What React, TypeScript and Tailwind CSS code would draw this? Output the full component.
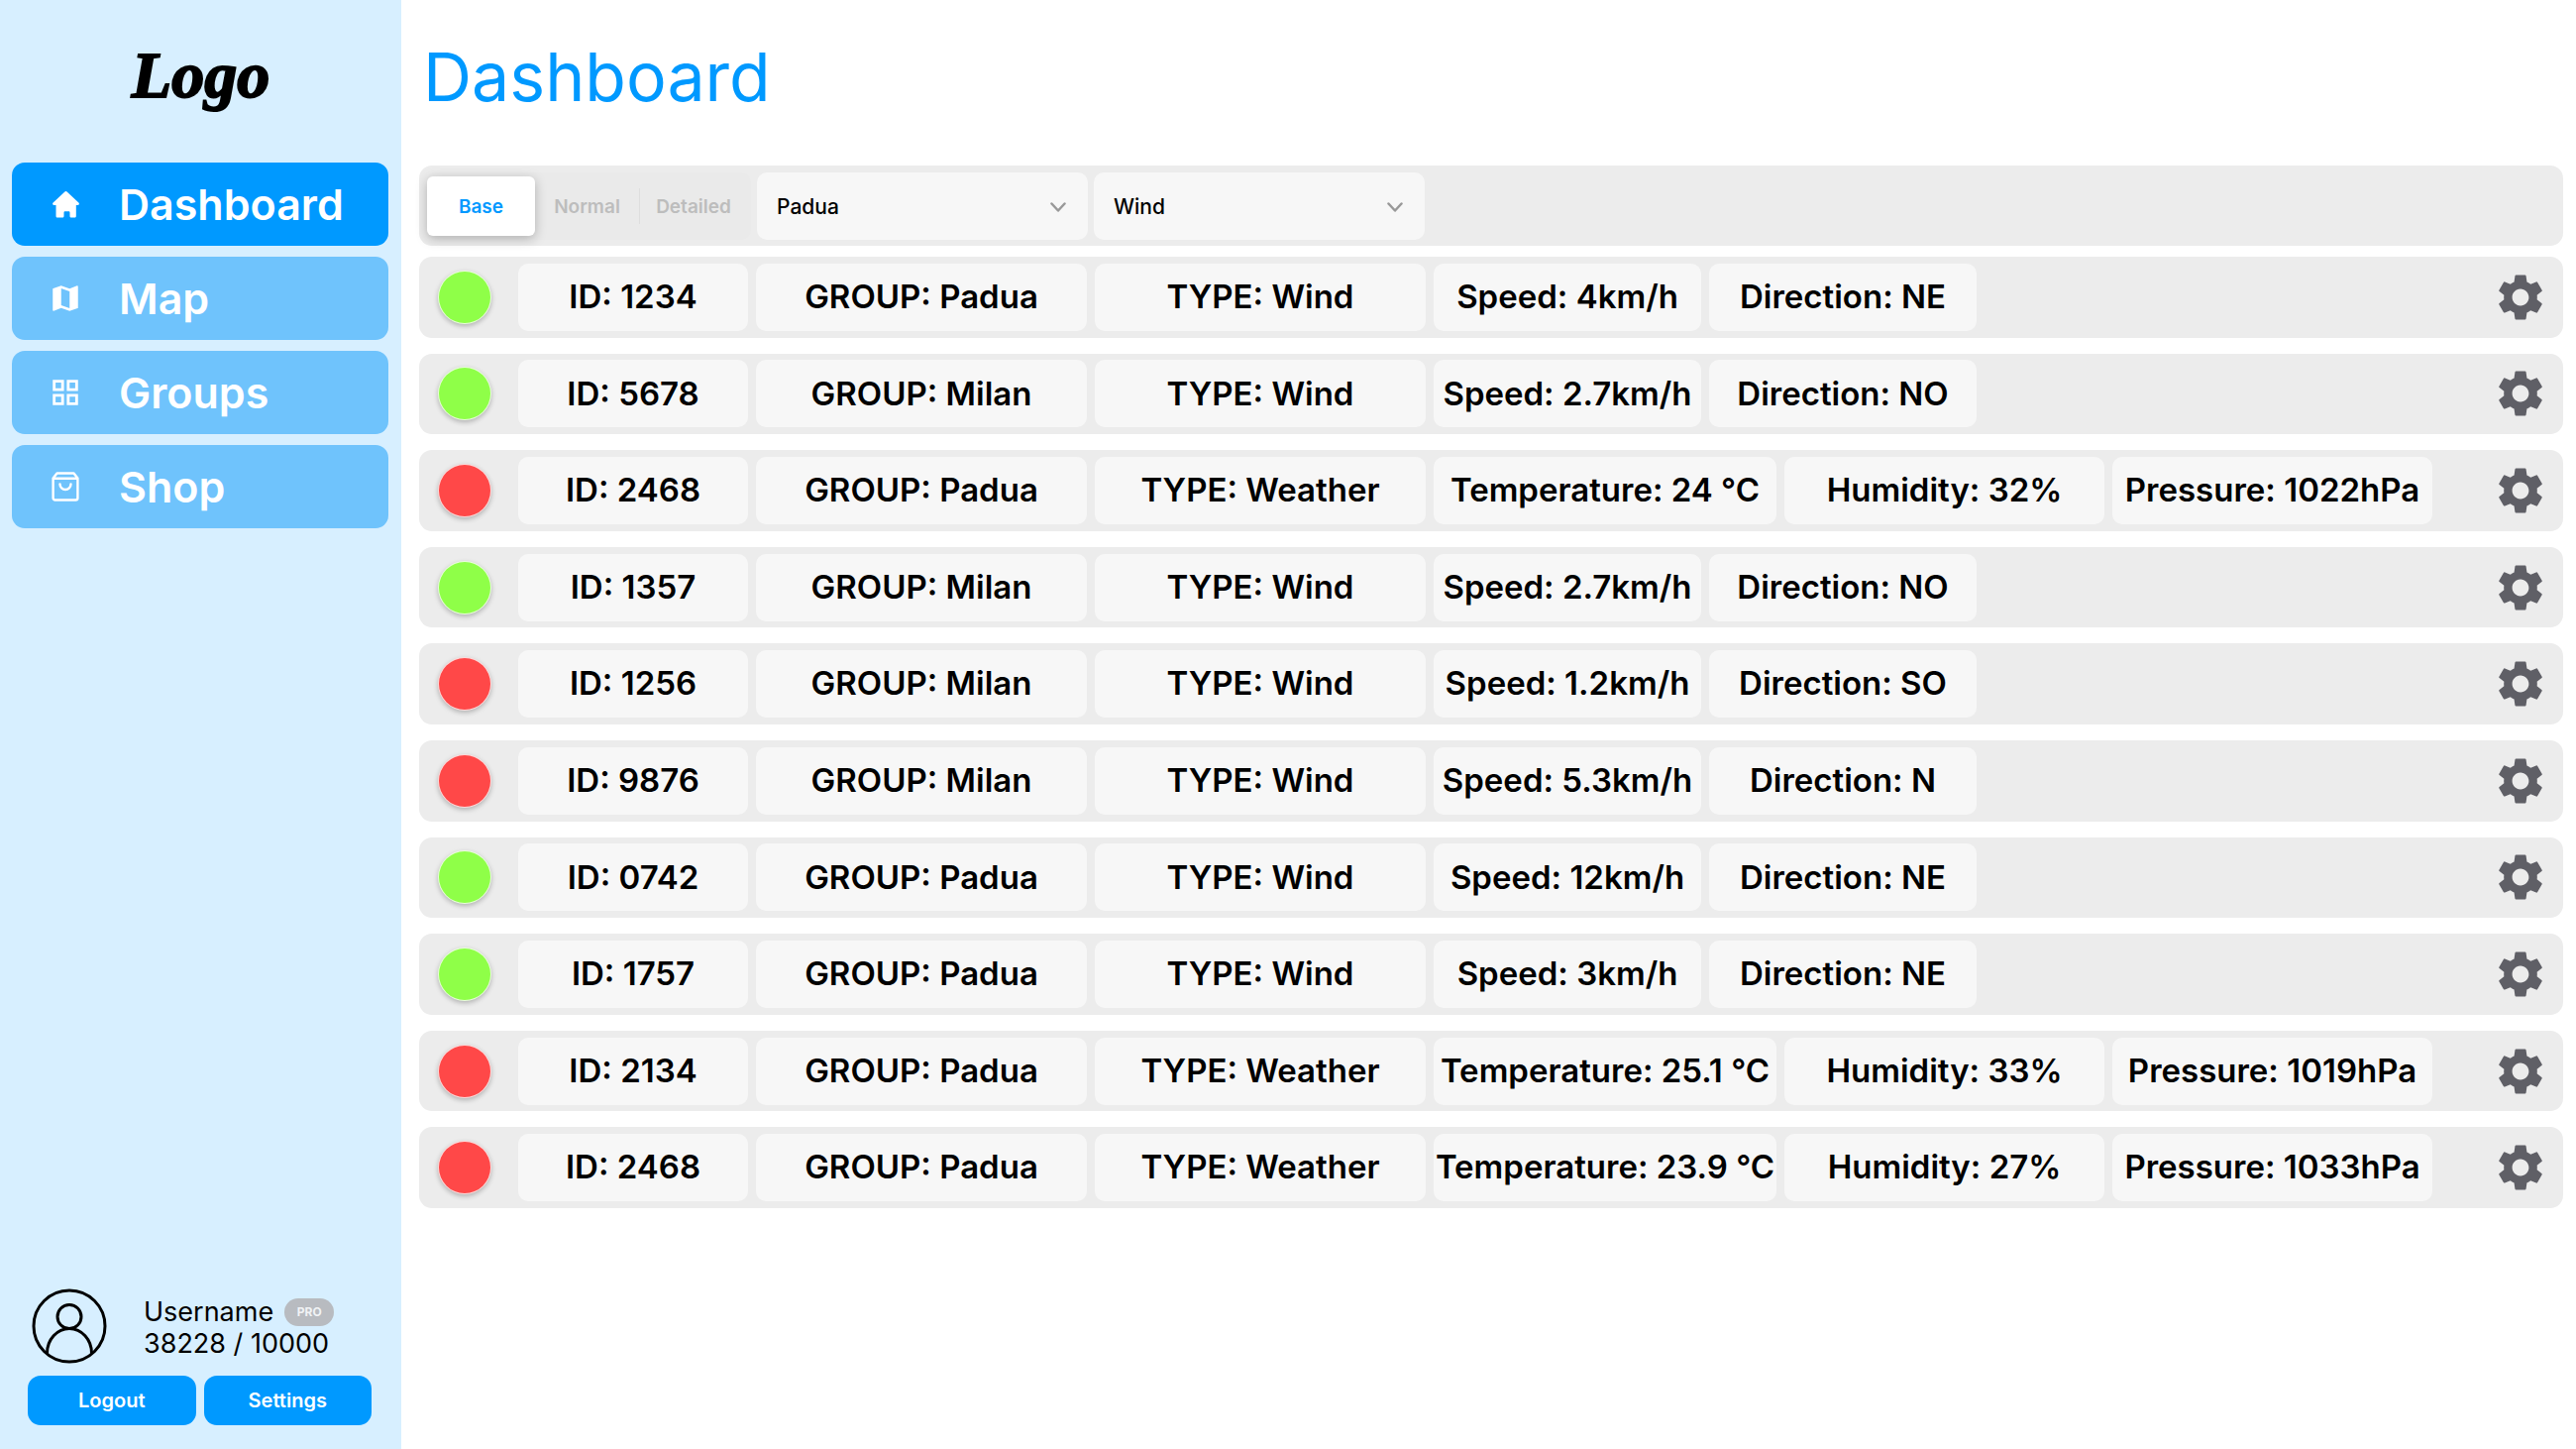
import React from "react";
import { MdMap, MdSettings, MdGridView } from "react-icons/md";

const HomeIcon = () => (
  <svg viewBox="0 0 27 27" className="size-[27px]" fill="currentColor" aria-hidden="true">
    <path d="M12.4.5a1.6 1.6 0 0 1 2.2 0L26.400 11.600c.9.9.5 2.300-.9 2.300h-1.700v11c0 1-.7 1.700-1.700 1.700h-2.900c-1 0-1.700-.7-1.700-1.700v-3.500c0-.7-.5-1.200-1.200-1.200h-3.600c-.7 0-1.200.5-1.200 1.200v3.500c0 1-.7 1.700-1.700 1.700H5.200c-1 0-1.700-.7-1.700-1.700v-11H1.500c-1.400 0-1.800-1.400-.9-2.300z" />
  </svg>
);

const BagIcon = () => (
  <svg viewBox="0 0 28 30" className="h-[30px] w-7" fill="none" stroke="currentColor" strokeWidth="2.4" strokeLinecap="round" strokeLinejoin="round" aria-hidden="true">
    <path d="M1.600 6.500 5.500 1.500h17L26.400 6.500v20a2 2 0 0 1-2 2H3.600a2 2 0 0 1-2-2zM1.600 6.800h24.800" />
    <path d="M8.500 12.500a5.500 5.500 0 0 0 11 0" />
  </svg>
);

const nav = [
  { label: "Dashboard", icon: <HomeIcon />, active: true },
  { label: "Map", icon: <MdMap className="size-[34px]" /> },
  { label: "Groups", icon: <MdGridView className="size-[34px]" /> },
  { label: "Shop", icon: <BagIcon /> },
];

type Sensor = { on: boolean; id: string; group: string; type: "Wind" | "Weather"; values: string[] };

const sensors: Sensor[] = [
  { on: true, id: "1234", group: "Padua", type: "Wind", values: ["Speed: 4km/h", "Direction: NE"] },
  { on: true, id: "5678", group: "Milan", type: "Wind", values: ["Speed: 2.7km/h", "Direction: NO"] },
  { on: false, id: "2468", group: "Padua", type: "Weather", values: ["Temperature: 24 °C", "Humidity: 32%", "Pressure: 1022hPa"] },
  { on: true, id: "1357", group: "Milan", type: "Wind", values: ["Speed: 2.7km/h", "Direction: NO"] },
  { on: false, id: "1256", group: "Milan", type: "Wind", values: ["Speed: 1.2km/h", "Direction: SO"] },
  { on: false, id: "9876", group: "Milan", type: "Wind", values: ["Speed: 5.3km/h", "Direction: N"] },
  { on: true, id: "0742", group: "Padua", type: "Wind", values: ["Speed: 12km/h", "Direction: NE"] },
  { on: true, id: "1757", group: "Padua", type: "Wind", values: ["Speed: 3km/h", "Direction: NE"] },
  { on: false, id: "2134", group: "Padua", type: "Weather", values: ["Temperature: 25.1 °C", "Humidity: 33%", "Pressure: 1019hPa"] },
  { on: false, id: "2468", group: "Padua", type: "Weather", values: ["Temperature: 23.9 °C", "Humidity: 27%", "Pressure: 1033hPa"] },
];

const valueWidths = {
  Wind: ["w-[270px]", "w-[270px]"],
  Weather: ["w-[346px]", "w-[323px]", "w-[323px]"],
};

function Cell({ width, children }: { width: string; children: React.ReactNode }) {
  return (
    <div className={`flex h-[68px] shrink-0 items-center justify-center rounded-[10px] bg-[#f7f7f7] whitespace-nowrap ${width}`}>
      {children}
    </div>
  );
}

function SensorRow({ sensor }: { sensor: Sensor }) {
  return (
    <li className="flex items-center gap-2 rounded-[13px] bg-[#ececec] pr-[15px] pl-[19px] text-[33px] font-semibold">
      <span
        role="img"
        aria-label={sensor.on ? "Online" : "Offline"}
        className={`mr-[19px] size-[54px] shrink-0 rounded-full border border-white/80 shadow-[0_2px_5px_rgba(0,0,0,0.25)] ${sensor.on ? "bg-[#8fff48]" : "bg-[#ff4848]"}`}
      />
      <Cell width="w-[232px]">ID: {sensor.id}</Cell>
      <Cell width="w-[334px]">GROUP: {sensor.group}</Cell>
      <Cell width="w-[334px]">TYPE: {sensor.type}</Cell>
      {sensor.values.map((value, i) => (
        <Cell key={value} width={valueWidths[sensor.type][i]}>{value}</Cell>
      ))}
      <button type="button" aria-label={`Settings for sensor ${sensor.id}`} className="ml-auto text-[#5f5f66]">
        <MdSettings className="size-[56px]" />
      </button>
    </li>
  );
}

function Select({ label, options }: { label: string; options: string[] }) {
  return (
    <div className="relative w-[334px]">
      <select aria-label={label} className="h-[68px] w-full appearance-none rounded-[10px] bg-[#f7f7f7] pt-[2px] pr-14 pl-5 text-[21px] font-medium text-black">
        {options.map((option) => (
          <option key={option}>{option}</option>
        ))}
      </select>
      <svg viewBox="0 0 16 10" className="pointer-events-none absolute top-[30px] right-[22px] h-[10px] w-4" fill="none" stroke="#999" strokeWidth="2.500" strokeLinecap="round" strokeLinejoin="round" aria-hidden="true">
        <path d="m1.500 1.500 6.500 7 6.500-7" />
      </svg>
    </div>
  );
}

export default function App() {
  return (
    <div className="flex min-h-screen bg-white font-['Inter',sans-serif] text-black">
      <aside className="flex w-[405px] shrink-0 flex-col bg-[#d7efff] px-3 pb-6">
        <div className="flex h-[164px] justify-center pt-9 font-['Liberation_Serif',serif] text-[66px] leading-[80px] font-bold italic [-webkit-text-stroke:2px_black]">
          Logo
        </div>
        <nav className="flex flex-col gap-[11px]">
          {nav.map((item) => (
            <a
              key={item.label}
              href="#"
              aria-current={item.active ? "page" : undefined}
              className={`flex h-[84px] w-[380px] items-center rounded-[13px] text-[43px] font-semibold text-white ${item.active ? "bg-[#0099ff]" : "bg-[#6fc3fc]"}`}
            >
              <span className="flex w-[108px] items-center justify-center">{item.icon}</span>
              <span className="pt-px">{item.label}</span>
            </a>
          ))}
        </nav>

        <div className="mt-auto flex items-center pl-5">
          <svg viewBox="0 0 76 76" className="size-[76px]" fill="none" stroke="black" strokeWidth="3" aria-hidden="true">
            <circle cx="38" cy="38" r="36" />
            <circle cx="38" cy="28.500" r="12" />
            <path d="M15.500 65.500a22.500 25 0 0 1 45 0" />
          </svg>
          <div className="ml-[37px] pt-[3px] text-[27px] leading-8">
            <div className="flex items-center gap-[11px]">
              <span>Username</span>
              <span className="flex h-7 w-[50px] items-center justify-center rounded-full bg-[#b8bbc0] text-[12px] font-bold text-[#f1f3f5]">PRO</span>
            </div>
            <div>38228 / 10000</div>
          </div>
        </div>
        <div className="mt-3 grid grid-cols-2 gap-2 pr-[18px] pl-4 text-[20px] font-semibold text-white">
          <button type="button" className="h-[50px] rounded-[13px] bg-[#0099ff]">Logout</button>
          <button type="button" className="h-[50px] rounded-[13px] bg-[#0099ff]">Settings</button>
        </div>
      </aside>

      <main className="min-w-0 flex-1 pr-[13px] pl-[18px]">
        <h1 className="flex h-[167px] items-start pt-8 pl-1 text-[68px] leading-[90px] text-[#0099ff]">Dashboard</h1>

        <div className="mb-[11px] flex h-[81px] items-center gap-[6px] rounded-[13px] bg-[#ececec] pl-[7px]">
          <div role="group" aria-label="Detail level" className="flex h-[68px] w-[328px] items-center rounded-[10px] bg-[#eaeaea] pr-1 pl-px text-[19px] font-semibold text-[#bdbdbd]">
            <button type="button" aria-pressed="true" className="h-[60px] w-[109px] rounded-md bg-white pt-1 text-[#0099ff] shadow-[0_3px_12px_rgba(0,0,0,0.25)]">Base</button>
            <button type="button" aria-pressed="false" className="h-[60px] w-[105px] pt-1">Normal</button>
            <span className="h-9 w-px bg-[#dedede]" />
            <button type="button" aria-pressed="false" className="h-[60px] flex-1 pt-1">Detailed</button>
          </div>
          <Select label="Group" options={["Padua", "Milan"]} />
          <Select label="Type" options={["Wind", "Weather"]} />
        </div>

        <ul className="grid min-h-[960px] auto-rows-fr gap-4">
          {sensors.map((sensor, i) => (
            <SensorRow key={i} sensor={sensor} />
          ))}
        </ul>
      </main>
    </div>
  );
}
